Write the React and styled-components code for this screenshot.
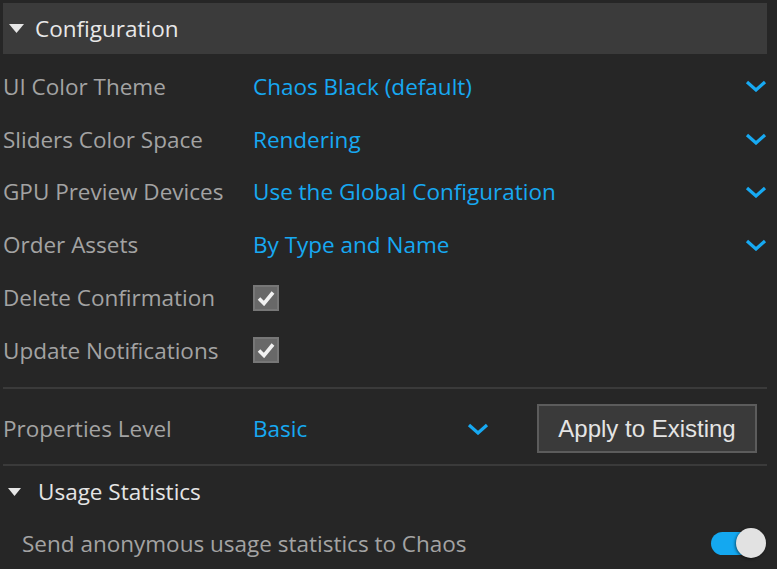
import React from 'react';
import styled, { createGlobalStyle } from 'styled-components';

const GlobalStyle = createGlobalStyle`
  html, body {
    margin: 0;
    background: #262626;
  }
  body {
    font-family: "Open Sans", "Noto Sans", sans-serif;
    overflow: hidden;
  }
`;

const Chevron = () => (
  <svg width="22" height="12" viewBox="0 0 22 12">
    <path d="M2 2 L11 10 L20 2" fill="none" stroke="#17a9f2" strokeWidth="3.2" />
  </svg>
);

const Triangle = ({ w = 15, h = 9 }) => (
  <svg width={w} height={h} viewBox="0 0 15 9">
    <path d="M0 0 H15 L7.5 9 Z" fill="#e6e6e6" />
  </svg>
);

const Check = () => (
  <svg width="18" height="16" viewBox="0 0 18 16">
    <path d="M2 8.5 L7 13.5 L16 2.5" fill="none" stroke="#f2f2f2" strokeWidth="3.6" />
  </svg>
);

const options = [
  { label: 'UI Color Theme', value: 'Chaos Black (default)' },
  { label: 'Sliders Color Space', value: 'Rendering' },
  { label: 'GPU Preview Devices', value: 'Use the Global Configuration' },
  { label: 'Order Assets', value: 'By Type and Name' },
];

const checks = ['Delete Confirmation', 'Update Notifications'];

export default () => (
  <>
    <GlobalStyle />
    <Panel>
      <SectionBar>
        <Triangle />
        <BarTitle>Configuration</BarTitle>
      </SectionBar>
      <Rows>
        {options.map((o) => (
          <Row key={o.label}>
            <Label>{o.label}</Label>
            <Value>{o.value}</Value>
            <Chevron />
          </Row>
        ))}
        {checks.map((c) => (
          <Row key={c}>
            <Label>{c}</Label>
            <CheckBox>
              <Check />
            </CheckBox>
          </Row>
        ))}
      </Rows>
      <Divider $top={10} $bottom={10} />
      <LevelRow>
        <Label>Properties Level</Label>
        <Value>Basic</Value>
        <Chevron />
        <ApplyButton>Apply to Existing</ApplyButton>
      </LevelRow>
      <Divider $top={5} $bottom={6} />
      <SubHeader>
        <Triangle w={13} h={8} />
        <SubTitle>Usage Statistics</SubTitle>
      </SubHeader>
      <ToggleRow>
        <ToggleLabel>Send anonymous usage statistics to Chaos</ToggleLabel>
        <Toggle>
          <Knob />
        </Toggle>
      </ToggleRow>
    </Panel>
  </>
);

const Panel = styled.div`
  width: 777px;
  height: 569px;
  padding: 3px 10px 0 3px;
  box-sizing: border-box;
  display: flex;
  flex-direction: column;
`;

const SectionBar = styled.div`
  flex: none;
  height: 51px;
  background: #3b3b3b;
  display: flex;
  align-items: center;
  gap: 11px;
  padding-left: 6px;
`;

const BarTitle = styled.span`
  color: #e8e8e8;
  font-size: 22.5px;
`;

const Rows = styled.div`
  display: flex;
  flex-direction: column;
  padding-top: 6px;
`;

const Row = styled.div`
  height: 52.8px;
  display: grid;
  grid-template-columns: 250px 1fr auto;
  align-items: center;
`;

const Label = styled.span`
  color: #a3a3a3;
  font-size: 22.5px;
`;

const Value = styled.span`
  color: #17a9f2;
  font-size: 22.5px;
`;

const CheckBox = styled.div`
  width: 22px;
  height: 22px;
  background: #686868;
  border: 2px solid #777;
  display: flex;
  align-items: center;
  justify-content: center;
`;

const Divider = styled.div`
  flex: none;
  height: 2px;
  background: #3a3a3a;
  margin: ${(p) => p.$top}px 0 ${(p) => p.$bottom}px;
`;

const LevelRow = styled.div`
  flex: none;
  height: 60px;
  display: grid;
  grid-template-columns: 250px 214px auto 1fr;
  align-items: center;
`;

const ApplyButton = styled.button`
  justify-self: end;
  width: 220px;
  height: 49px;
  margin-right: 10px;
  padding: 0;
  background: #3a3a3a;
  border: 2px solid #5c5c5c;
  color: #e4e4e4;
  font-family: "Liberation Sans", Arial, sans-serif;
  font-size: 24px;
`;

const SubHeader = styled.div`
  flex: none;
  display: flex;
  align-items: center;
  gap: 17px;
  padding-left: 5px;
  height: 40px;
`;

const SubTitle = styled.span`
  color: #e4e4e4;
  font-size: 22.5px;
`;

const ToggleRow = styled.div`
  flex: none;
  display: flex;
  align-items: center;
  justify-content: space-between;
  padding-left: 19px;
  height: 64px;
`;

const ToggleLabel = styled.span`
  color: #a3a3a3;
  font-size: 22.5px;
`;

const Toggle = styled.div`
  position: relative;
  width: 40px;
  height: 23px;
  border-radius: 12px;
  background: #14a8f0;
  margin-right: 16px;
`;

const Knob = styled.div`
  position: absolute;
  right: -15px;
  top: -4px;
  width: 30px;
  height: 30px;
  border-radius: 50%;
  background: #e2e2e2;
  box-shadow: -1px 1px 3px rgba(0, 0, 0, 0.5);
`;
